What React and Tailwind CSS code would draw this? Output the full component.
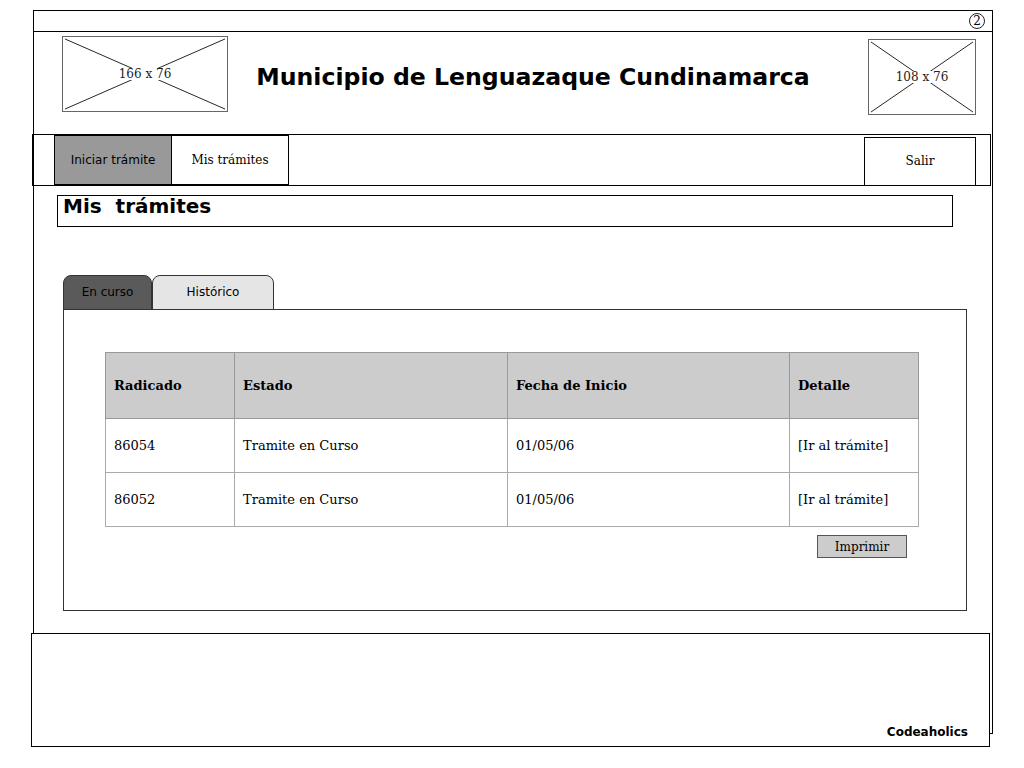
import React from "react";

const sans = { fontFamily: '"DejaVu Sans", Verdana, sans-serif' };
const serif = { fontFamily: '"DejaVu Serif", Georgia, serif' };

function Placeholder({ w, h, label }) {
  return (
    <div
      className="relative border border-[#666] bg-white shrink-0"
      style={{ width: w, height: h }}
    >
      <svg className="absolute inset-0 h-full w-full" preserveAspectRatio="none" viewBox={`0 0 ${w} ${h}`}>
        <line x1="2" y1="2" x2={w - 2} y2={h - 2} stroke="#222" strokeWidth="1" />
        <line x1={w - 2} y1="2" x2="2" y2={h - 2} stroke="#222" strokeWidth="1" />
      </svg>
      <div className="absolute inset-0 flex items-center justify-center">
        <span className="bg-white px-1 text-[12px] leading-none text-[#222]" style={serif}>
          {label}
        </span>
      </div>
    </div>
  );
}

const rows = [
  { id: "86054", estado: "Tramite en Curso", fecha: "01/05/06" },
  { id: "86052", estado: "Tramite en Curso", fecha: "01/05/06" },
];

export default function App() {
  return (
    <div className="min-h-[768px] w-[1024px] bg-white pt-[10px] text-black">
      <div className="ml-[33px] flex h-[724px] w-[960px] flex-col border border-black">
        <div className="flex h-[21px] items-center justify-end border-b border-black pr-[7px]">
          <span className="flex h-[16px] w-[16px] items-center justify-center rounded-full border border-[#222] text-[12px] leading-none" style={serif}>
            2
          </span>
        </div>

        <div className="flex h-[102px] items-start">
          <div className="ml-[28px] mt-[4px]">
            <Placeholder w={166} h={76} label="166 x 76" />
          </div>
          <div className="flex flex-1 justify-center pr-[30px] pt-[34px]">
            <h1 className="whitespace-nowrap text-[23.6px] font-bold leading-none" style={sans}>
              Municipio de Lenguazaque Cundinamarca
            </h1>
          </div>
          <div className="mr-[16px] mt-[7px]">
            <Placeholder w={108} h={76} label="108 x 76" />
          </div>
        </div>

        <nav className="-ml-[2px] flex h-[52px] w-[959px] items-center border border-black pl-[21px] pr-[14px]">
          <button className="h-[50px] w-[118px] border border-black bg-[#999] text-[12px]" style={sans}>
            Iniciar trámite
          </button>
          <button className="h-[50px] w-[117px] border border-l-0 border-black bg-white text-[12px]" style={serif}>
            Mis trámites
          </button>
          <div className="flex-1" />
          <button className="mt-[2px] h-[49px] w-[112px] border border-black bg-white text-[12px]" style={serif}>
            Salir
          </button>
        </nav>

        <div className="ml-[23px] mt-[9px] h-[32px] w-[896px] border border-black px-[5px]">
          <h2 className="whitespace-pre text-[20px] font-bold leading-[20px]" style={sans}>
            {"Mis  trámites"}
          </h2>
        </div>

        <div className="ml-[29px] mt-[47px] w-[904px]">
          <div className="flex h-[35px] items-end">
            <div className="-mb-px flex h-[35px] w-[89px] items-center justify-center rounded-t-[8px] border border-[#333] bg-[#5a5a5a] pb-[2px] text-[12px] text-black" style={sans}>
              En curso
            </div>
            <div className="-mb-px flex h-[35px] w-[122px] items-center justify-center rounded-t-[8px] border border-[#333] bg-[#e5e5e5] pb-[2px] text-[12px] text-black" style={sans}>
              Histórico
            </div>
          </div>
          <div className="h-[302px] border border-[#333] bg-white pl-[41px] pt-[42px]">
            <table className="w-[814px] border-collapse text-[13px]" style={serif}>
              <thead>
                <tr className="h-[66px] bg-[#ccc]">
                  <th className="w-[129px] border border-[#999] pl-[8px] text-left font-bold">Radicado</th>
                  <th className="w-[273px] border border-[#999] pl-[8px] text-left font-bold">Estado</th>
                  <th className="w-[282px] border border-[#999] pl-[8px] text-left font-bold">Fecha de Inicio</th>
                  <th className="border border-[#999] pl-[8px] text-left font-bold">Detalle</th>
                </tr>
              </thead>
              <tbody>
                {rows.map((r) => (
                  <tr key={r.id} className="h-[54px]">
                    <td className="border border-[#aaa] pl-[8px]">{r.id}</td>
                    <td className="border border-[#aaa] pl-[8px]">{r.estado}</td>
                    <td className="border border-[#aaa] pl-[8px]">{r.fecha}</td>
                    <td className="border border-[#aaa] pl-[8px]">[Ir al trámite]</td>
                  </tr>
                ))}
              </tbody>
            </table>
            <div className="flex w-[814px] justify-end pr-[12px] pt-[8px]">
              <button className="h-[23px] w-[90px] border border-[#555] bg-[#ccc] text-[12px]" style={serif}>
                Imprimir
              </button>
            </div>
          </div>
        </div>
      </div>

      <footer className="-mt-[101px] relative ml-[31px] flex h-[114px] w-[959px] items-end justify-end border border-black bg-white pb-[5px] pr-[21px]">
        <span className="text-[12px] font-bold" style={sans}>Codeaholics</span>
      </footer>
    </div>
  );
}
